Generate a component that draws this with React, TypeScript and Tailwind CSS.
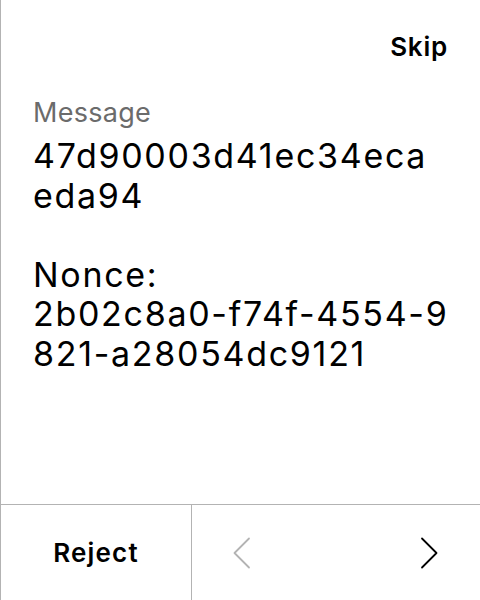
import React from 'react';

// Lines as they wrap on the device screen
const lines = ['47d90003d41ec34eca', 'eda94', '', 'Nonce:', '2b02c8a0-f74f-4554-9', '821-a28054dc9121'];

function Chevron({ dir, className }: { dir: 'left' | 'right'; className?: string }) {
  return (
    <svg width="18" height="32" viewBox="0 0 18 32" fill="none" className={className}>
      <path
        d={dir === 'left' ? 'M16 1.5 L1.5 16 L16 30.5' : 'M2 1.5 L16.5 16 L2 30.5'}
        stroke="currentColor"
        strokeWidth="1.8"
        strokeLinecap="round"
        strokeLinejoin="round"
      />
    </svg>
  );
}

export default function App() {
  return (
    <div
      className="flex flex-col h-[600px] w-[480px] bg-white border-l border-[#b3b3b3] text-black"
      style={{ fontFamily: 'Inter, "Noto Sans", sans-serif' }}
    >
      {/* Header */}
      <div className="flex justify-end px-8 pt-[29px]">
        <button className="text-[26px] font-semibold leading-[36px] tracking-[0.03em]">Skip</button>
      </div>

      {/* Message body */}
      <div className="flex-1 pl-8 pr-6 pt-[32px]">
        <div className="text-[27px] leading-[32px] text-[#6b6b6b] tracking-[0.01em]">Message</div>
        <div className="text-[34px] leading-[39.5px] tracking-[0.05em] whitespace-pre mt-[7px]">
          {lines.join('\n')}
        </div>
      </div>

      {/* Footer */}
      <div className="flex h-[96px] border-t border-[#b3b3b3]">
        <button className="w-[191px] flex items-center justify-center text-[26px] font-semibold tracking-[0.045em] border-r border-[#b3b3b3]">
          Reject
        </button>
        <div className="flex-1 flex items-center justify-between pl-[41px] pr-[42px]">
          <Chevron dir="left" className="text-[#b3b3b3]" />
          <Chevron dir="right" className="text-black" />
        </div>
      </div>
    </div>
  );
}
